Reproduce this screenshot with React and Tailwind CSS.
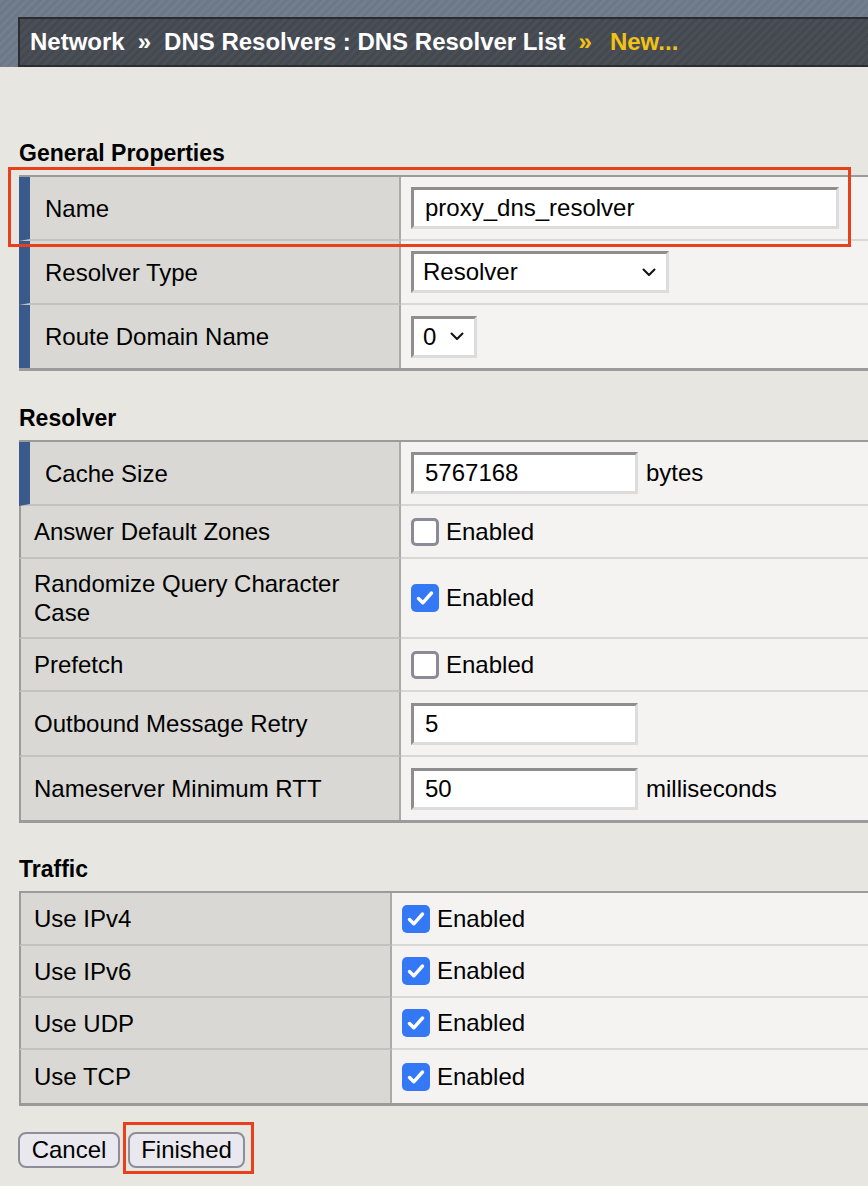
import React from 'react';

const GENERAL = [
  { label: 'Name', bar: true, h: 'h-[64px]', kind: 'input', value: 'proxy_dns_resolver', w: 'w-[428px]' },
  { label: 'Resolver Type', bar: true, h: 'h-[64px]', kind: 'select', value: 'Resolver', w: 'w-[258px]' },
  { label: 'Route Domain Name', bar: true, h: 'h-[63px]', kind: 'select', value: '0', w: 'w-[66px]' },
];

const RESOLVER = [
  { label: 'Cache Size', bar: true, h: 'h-[64px]', kind: 'input', value: '5767168', w: 'w-[227px]', unit: 'bytes' },
  { label: 'Answer Default Zones', h: 'h-[53px]', kind: 'check', checked: false },
  { label: 'Randomize Query Character Case', h: 'h-[80px]', kind: 'check', checked: true },
  { label: 'Prefetch', h: 'h-[53px]', kind: 'check', checked: false },
  { label: 'Outbound Message Retry', h: 'h-[65px]', kind: 'input', value: '5', w: 'w-[227px]' },
  { label: 'Nameserver Minimum RTT', h: 'h-[63px]', kind: 'input', value: '50', w: 'w-[227px]', unit: 'milliseconds' },
];

const TRAFFIC = [
  { label: 'Use IPv4', h: 'h-[53px]', kind: 'check', checked: true },
  { label: 'Use IPv6', h: 'h-[52px]', kind: 'check', checked: true },
  { label: 'Use UDP', h: 'h-[52px]', kind: 'check', checked: true },
  { label: 'Use TCP', h: 'h-[53px]', kind: 'check', checked: true },
];

function Checkbox({ checked }) {
  if (checked) {
    return (
      <span className="w-[28px] h-[28px] rounded-[5px] bg-[#3478f6] flex items-center justify-center shrink-0">
        <svg width="28" height="28" viewBox="0 0 28 28" fill="none">
          <path d="M7.5 14.5l4.3 4.3L20.5 9" stroke="white" strokeWidth="3.4" strokeLinecap="round" strokeLinejoin="round" />
        </svg>
      </span>
    );
  }
  return <span className="w-[28px] h-[28px] rounded-[5px] border-[3px] border-[#8b8a96] bg-white shrink-0" />;
}

function Value({ row }) {
  if (row.kind === 'check') {
    return (
      <div className="flex items-center gap-[7px]">
        <Checkbox checked={row.checked} />
        <span>Enabled</span>
      </div>
    );
  }
  if (row.kind === 'select') {
    return (
      <div className={`${row.w} h-[42px] bg-white border-[3px] border-t-[#8e8e8e] border-l-[#8e8e8e] border-b-[#dcdcdc] border-r-[#dcdcdc] pl-[9px] pr-[10px] flex items-center justify-between`}>
        <span>{row.value}</span>
        <svg width="14" height="9" viewBox="0 0 14 9" fill="none">
          <path d="M1.5 1.5L7 7l5.5-5.5" stroke="#111" strokeWidth="2" strokeLinecap="round" strokeLinejoin="round" />
        </svg>
      </div>
    );
  }
  return (
    <div className="flex items-center gap-[8px]">
      <input
        readOnly
        value={row.value}
        className={`${row.w} h-[42px] bg-white border-[3px] border-t-[#8e8e8e] border-l-[#8e8e8e] border-b-[#dcdcdc] border-r-[#dcdcdc] px-[11px] text-[24px] text-black outline-none`}
      />
      {row.unit && <span>{row.unit}</span>}
    </div>
  );
}

function PropTable({ rows, labelW, children }) {
  return (
    <div className="relative w-[860px] border-t-2 border-b-[3px] border-[#9b9b9b]">
      {rows.map((row, i) => {
        const last = i === rows.length - 1;
        return (
          <div key={row.label} className={`flex ${row.h}`}>
            <div
              className={`${labelW} shrink-0 flex items-center bg-[#d9d8d4] border-r-2 border-r-[#aaaaa8] leading-[29px] ${
                row.bar ? 'border-l-[11px] border-l-[#3a5a8c] pl-[15px]' : 'border-l-2 border-l-[#9b9b9b] pl-[13px]'
              } ${last ? '' : 'border-b-2 border-b-[#c2c2bf]'}`}
            >
              <span className="pr-[40px]">{row.label}</span>
            </div>
            <div className={`flex-1 flex items-center bg-[#f4f3f1] pl-[10px] ${last ? '' : 'border-b-2 border-b-[#d8d8d5]'}`}>
              <Value row={row} />
            </div>
          </div>
        );
      })}
      {children}
    </div>
  );
}

function Heading({ children, className }) {
  return <h2 className={`font-bold text-[23px] leading-[28px] mb-[8px] ${className}`}>{children}</h2>;
}

export default function App() {
  return (
    <div className="w-[868px] min-h-[1186px] overflow-hidden bg-[#e7e6e1] text-[24px] text-black font-['Liberation_Sans',Arial,sans-serif]">
      <div className="h-[67px] pt-[17px] pl-[18px] bg-[#707b8b] bg-[repeating-linear-gradient(135deg,#727d8e_0px,#727d8e_3px,#6c7787_3px,#6c7787_6px)]">
        <div className="h-[50px] border-y-2 border-l-2 border-[#2c2d30] bg-[#474c55] bg-[repeating-linear-gradient(135deg,#494e57_0px,#494e57_3px,#44484f_3px,#44484f_6px)] flex items-center pl-[10px] font-bold text-white text-[24px]">
          <span>Network</span>
          <span className="mx-[13px]">»</span>
          <span>DNS Resolvers : DNS Resolver List</span>
          <span className="ml-[13px] mr-[18px] text-[#f2c214]">»</span>
          <span className="text-[#f2c214]">New...</span>
        </div>
      </div>

      <div className="pl-[19px]">
        <Heading className="mt-[72px]">General Properties</Heading>
        <PropTable rows={GENERAL} labelW="w-[382px]">
          <div className="absolute left-[-11px] top-[-10px] w-[843px] h-[80px] border-[3px] border-[#e8401c] pointer-events-none" />
        </PropTable>

        <Heading className="mt-[33px]">Resolver</Heading>
        <PropTable rows={RESOLVER} labelW="w-[382px]" />

        <Heading className="mt-[32px]">Traffic</Heading>
        <PropTable rows={TRAFFIC} labelW="w-[373px]" />

        <div className="flex gap-[8px] mt-[26px] ml-[-1px]">
          <button className="w-[102px] h-[36px] rounded-[8px] border-2 border-[#8e8d99] bg-[#e9e8ee] text-[24px] leading-none">Cancel</button>
          <div className="relative">
            <button className="w-[117px] h-[36px] rounded-[8px] border-2 border-[#8e8d99] bg-[#e9e8ee] text-[24px] leading-none">Finished</button>
            <div className="absolute left-[-5px] top-[-10px] w-[131px] h-[52px] border-[3px] border-[#e8401c] pointer-events-none" />
          </div>
        </div>
      </div>
    </div>
  );
}
